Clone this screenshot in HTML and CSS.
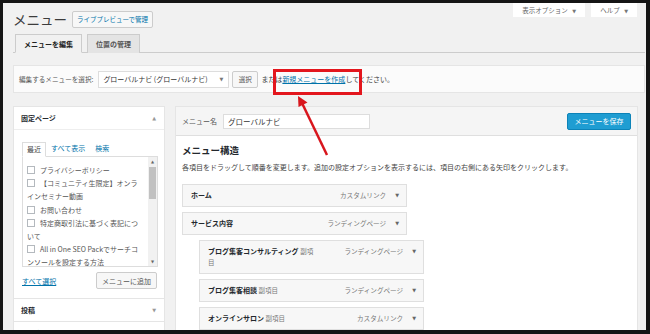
FILE: index.html
```html
<!DOCTYPE html>
<html lang="ja">
<head>
  <meta charset="UTF-8" />
  <title>メニュー</title>
  <link rel="stylesheet" href="styles.css">
</head>
<body>
  <div class="screen">
    <div class="top">
      <div class="title-row">
        <h1>メニュー</h1>
        <a class="title-action">ライブプレビューで管理</a>
      </div>
      <div class="screen-meta">
        <span class="meta-tab">表示オプション <i class="caret">▼</i></span>
        <span class="meta-tab">ヘルプ <i class="caret">▼</i></span>
      </div>
    </div>

    <div class="nav-tabs">
      <span class="nav-tab active">メニューを編集</span>
      <span class="nav-tab">位置の管理</span>
    </div>

    <div class="manage-menus">
      <span class="manage-label">編集するメニューを選択:</span>
      <span class="select">グローバルナビ (グローバルナビ) <i class="caret">▼</i></span>
      <span class="button small">選択</span>
      <span class="manage-note">または<a class="link">新規メニューを作成</a>してください。</span>
    </div>

    <div class="columns">
      <div class="side">
        <div class="acc-section">
          <div class="acc-head">固定ページ <i class="caret up">▲</i></div>
          <div class="acc-body">
            <div class="tabs">
              <span class="tab active">最近</span>
              <span class="tab">すべて表示</span>
              <span class="tab">検索</span>
            </div>
            <div class="checklist">
              <div class="items">
                <div><span class="check"></span>プライバシーポリシー</div>
                <div><span class="check"></span>【コミュニティ生限定】オンラインセミナー動画</div>
                <div><span class="check"></span>お問い合わせ</div>
                <div><span class="check"></span>特定商取引法に基づく表記について</div>
                <div><span class="check"></span>All in One SEO Packでサーチコンソールを設定する方法</div>
              </div>
              <div class="scrollbar">
                <span class="sb-arrow">▲</span>
                <span class="sb-track"><span class="sb-thumb"></span></span>
                <span class="sb-arrow">▼</span>
              </div>
            </div>
            <div class="acc-actions">
              <a class="link">すべて選択</a>
              <span class="button add">メニューに追加</span>
            </div>
          </div>
        </div>
        <div class="acc-section">
          <div class="acc-head">投稿 <i class="caret">▼</i></div>
        </div>
        <div class="acc-section">
          <div class="acc-head">カスタムリンク <i class="caret">▼</i></div>
        </div>
      </div>

      <div class="main">
        <div class="menu-header">
          <span class="menu-name-label">メニュー名</span>
          <span class="menu-name">グローバルナビ</span>
          <span class="button primary">メニューを保存</span>
        </div>
        <div class="menu-body">
          <h3>メニュー構造</h3>
          <p class="desc">各項目をドラッグして順番を変更します。追加の設定オプションを表示するには、項目の右側にある矢印をクリックします。</p>
          <div class="menu-items">
            <div class="menu-item">
              <span class="item-title">ホーム</span>
              <span class="item-type">カスタムリンク</span><i class="caret">▼</i>
            </div>
            <div class="menu-item">
              <span class="item-title">サービス内容</span>
              <span class="item-type">ランディングページ</span><i class="caret">▼</i>
            </div>
            <div class="menu-item sub">
              <span class="item-title">ブログ集客コンサルティング <span class="sub-label">副項目</span></span>
              <span class="item-type">ランディングページ</span><i class="caret">▼</i>
            </div>
            <div class="menu-item sub">
              <span class="item-title">ブログ集客相談 <span class="sub-label">副項目</span></span>
              <span class="item-type">ランディングページ</span><i class="caret">▼</i>
            </div>
            <div class="menu-item sub">
              <span class="item-title">オンラインサロン <span class="sub-label">副項目</span></span>
              <span class="item-type">カスタムリンク</span><i class="caret">▼</i>
            </div>
          </div>
        </div>
      </div>
    </div>

    <!-- red annotation drawn over the screenshot -->
    <svg class="annotation" width="650" height="334" viewBox="0 0 650 334">
      <rect x="274.5" y="70.5" width="86" height="23" fill="none" stroke="#e3161d" stroke-width="3"/>
      <line x1="327" y1="155" x2="302" y2="103" stroke="#d8161d" stroke-width="2.5"/>
      <polygon points="298,96 307.5,102.5 298.5,107" fill="#d8161d"/>
    </svg>
  </div>
</body>
</html>
```

FILE: styles.css
```css
* {
  box-sizing: border-box;
}
body {
  margin: 0;
  font-family: "Noto Sans CJK JP", "Liberation Sans", sans-serif;
}
.screen {
  position: relative;
  width: 650px;
  height: 334px;
  overflow: hidden;
  background: #f1f1f1;
  border: 3px solid #151515;
  border-right-width: 4px;
  border-bottom-width: 4px;
  padding: 0 1px 0 10px;
  color: #444;
}
i {
  font-style: normal;
}
.caret {
  font-family: "DejaVu Sans", sans-serif;
  font-size: 5px;
  color: #777;
}
.link {
  color: #0073aa;
  text-decoration: underline;
}

/* header */
.top {
  display: flex;
  justify-content: space-between;
  align-items: flex-start;
}
.title-row {
  display: flex;
  align-items: center;
  gap: 5px;
  margin-top: 8px;
}
h1 {
  margin: 0;
  font-size: 13.5px;
  font-weight: 400;
  line-height: 17px;
  color: #3c3c3c;
}
.title-action {
  height: 17px;
  line-height: 15px;
  padding: 0 4px;
  border: 1px solid #ccc;
  border-radius: 2px;
  background: #f7f7f7;
  color: #0073aa;
  font-size: 6.5px;
}
.screen-meta {
  display: flex;
  gap: 6px;
  margin-right: 8px;
}
.meta-tab {
  height: 14px;
  line-height: 14px;
  padding: 0 9px;
  background: #fff;
  color: #666;
  font-size: 6.5px;
}
.meta-tab .caret {
  margin-left: 3px;
}

/* tabs */
.nav-tabs {
  display: flex;
  gap: 5px;
  margin-top: 6px;
  padding-left: 2px;
  border-bottom: 1px solid #ccc;
}
.nav-tab {
  height: 19px;
  line-height: 18px;
  margin-bottom: -1px;
  padding: 0 8px;
  border: 1px solid #ccc;
  border-bottom: none;
  background: #e4e4e4;
  color: #555;
  font-size: 7px;
  font-weight: bold;
}
.nav-tab.active {
  background: #f1f1f1;
  border-bottom: 1px solid #f1f1f1;
  color: #222;
}

/* manage bar */
.manage-menus {
  display: flex;
  align-items: center;
  height: 28px;
  margin-top: 12px;
  padding-left: 5px;
  border: 1px solid #e5e5e5;
  background: #fbfbfb;
  font-size: 6.6px;
  color: #555;
}
.select {
  display: flex;
  justify-content: space-between;
  align-items: center;
  width: 131px;
  height: 17px;
  margin-left: 5px;
  padding: 0 5px 0 4px;
  border: 1px solid #ddd;
  background: #fff;
  color: #333;
  font-size: 7px;
}
.button {
  display: inline-flex;
  align-items: center;
  justify-content: center;
  height: 17px;
  border: 1px solid #ccc;
  border-radius: 2px;
  background: #f7f7f7;
  color: #555;
  font-size: 7px;
}
.button.small {
  width: 26px;
  margin-left: 3px;
  font-size: 6.6px;
}
.manage-note {
  margin-left: 3px;
  font-size: 7px;
  color: #444;
}

/* columns */
.columns {
  display: flex;
  align-items: flex-start;
  gap: 10px;
  margin-top: 13px;
  margin-right: 7px;
}
.side {
  width: 152px;
  border: 1px solid #e5e5e5;
  background: #fff;
}
.acc-section {
  border-bottom: 1px solid #e5e5e5;
}
.acc-head {
  display: flex;
  justify-content: space-between;
  align-items: center;
  height: 22px;
  padding: 0 8px 0 7px;
  font-size: 7px;
  font-weight: bold;
  color: #23282d;
}
.acc-head .caret {
  color: #999;
}
.acc-body {
  padding: 12px 6px 9px 8px;
  border-top: 1px solid #eee;
}
.tabs {
  display: flex;
  font-size: 7px;
}
.tab {
  height: 14px;
  line-height: 13px;
  padding: 0 5px;
  color: #0073aa;
}
.tab.active {
  padding: 0 4px;
  margin-bottom: -1px;
  height: 15px;
  border: 1px solid #ddd;
  border-bottom: 1px solid #fff;
  background: #fff;
  color: #444;
}
.checklist {
  display: flex;
  height: 111px;
  border: 1px solid #ddd;
  background: #fff;
}
.items {
  flex: 1;
  overflow: hidden;
  padding: 7px 9px 0 4px;
  font-size: 7px;
  line-height: 13.2px;
  color: #555;
}
.check {
  display: inline-block;
  width: 8px;
  height: 8px;
  margin-right: 5px;
  vertical-align: -1px;
  border: 1px solid #b4b9be;
  background: #fff;
}
.scrollbar {
  display: flex;
  flex-direction: column;
  width: 9px;
  background: #f1f1f1;
}
.sb-arrow {
  height: 9px;
  line-height: 9px;
  text-align: center;
  font-family: "DejaVu Sans", sans-serif;
  font-size: 4px;
  color: #666;
}
.sb-track {
  flex: 1;
  padding: 1px 1px 0;
}
.sb-thumb {
  display: block;
  height: 32px;
  background: #c1c1c1;
}
.acc-actions {
  display: flex;
  justify-content: space-between;
  align-items: center;
  margin-top: 5px;
  font-size: 7px;
}
.button.add {
  width: 61px;
  margin-right: 1px;
}

/* menu structure */
.main {
  width: 463px;
  border: 1px solid #e5e5e5;
  background: #fff;
}
.menu-header {
  display: flex;
  align-items: center;
  height: 29px;
  padding: 0 6px;
  background: #f5f5f5;
  border-bottom: 1px solid #dfdfdf;
  font-size: 7px;
  color: #555;
}
.menu-name {
  width: 147px;
  height: 15px;
  line-height: 13px;
  margin-left: 6px;
  padding: 0 4px;
  border: 1px solid #ddd;
  background: #fff;
  color: #333;
  font-size: 7.5px;
}
.button.primary {
  width: 64px;
  margin-left: auto;
  border-color: #0d83b8;
  background: #1f9dd2;
  color: #fff;
}
.menu-body {
  padding: 0 6px;
}
h3 {
  margin: 8px 0 0;
  font-size: 9.5px;
  line-height: 13px;
  color: #23282d;
}
.desc {
  margin: 5px 0 0;
  font-size: 7px;
  line-height: 11px;
  color: #444;
  white-space: nowrap;
}
.menu-items {
  margin-top: 11px;
}
.menu-item {
  display: flex;
  align-items: flex-start;
  width: 225px;
  margin-bottom: 5px;
  padding: 5px 7px 5px 8px;
  border: 1px solid #dfdfdf;
  background: #f7f7f7;
  font-size: 7px;
  line-height: 11px;
}
.menu-item.sub {
  margin-left: 17px;
}
.item-title {
  width: 110px;
  font-weight: bold;
  color: #23282d;
}
.sub-label {
  font-size: 6.5px;
  font-weight: normal;
  color: #777;
}
.item-type {
  margin-left: auto;
  font-size: 6.6px;
  color: #777;
}
.menu-item .caret {
  margin-left: 9px;
  color: #666;
}

.annotation {
  position: absolute;
  left: -3px;
  top: -3px;
  pointer-events: none;
}
```
